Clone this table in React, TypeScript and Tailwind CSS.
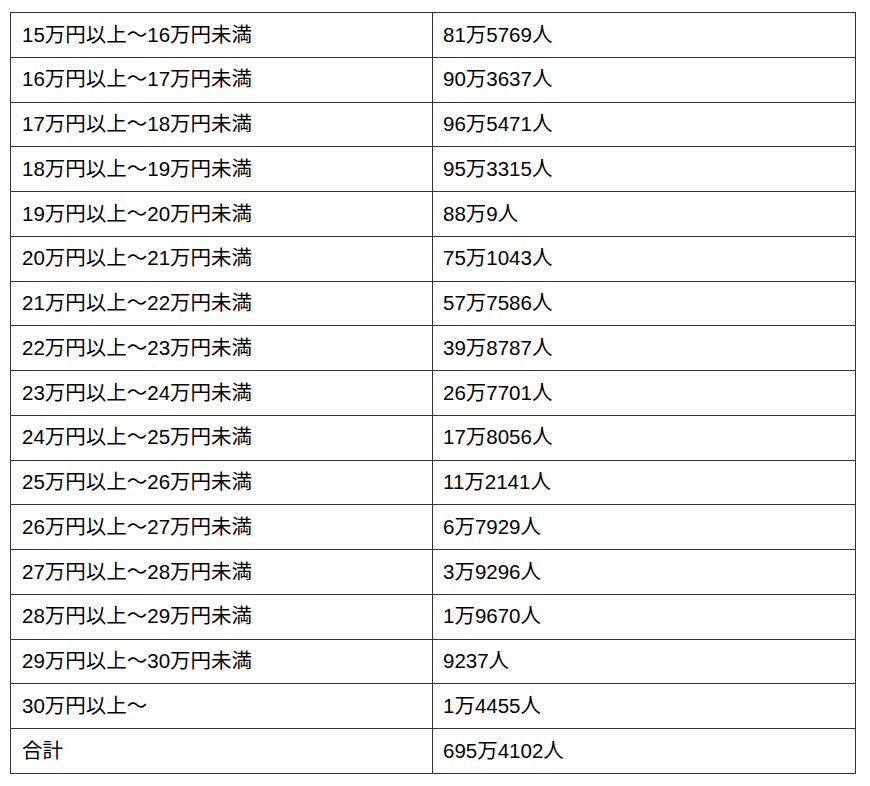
import React from "react";

const rows: [string, string][] = [
  ["15万円以上～16万円未満", "81万5769人"],
  ["16万円以上～17万円未満", "90万3637人"],
  ["17万円以上～18万円未満", "96万5471人"],
  ["18万円以上～19万円未満", "95万3315人"],
  ["19万円以上～20万円未満", "88万9人"],
  ["20万円以上～21万円未満", "75万1043人"],
  ["21万円以上～22万円未満", "57万7586人"],
  ["22万円以上～23万円未満", "39万8787人"],
  ["23万円以上～24万円未満", "26万7701人"],
  ["24万円以上～25万円未満", "17万8056人"],
  ["25万円以上～26万円未満", "11万2141人"],
  ["26万円以上～27万円未満", "6万7929人"],
  ["27万円以上～28万円未満", "3万9296人"],
  ["28万円以上～29万円未満", "1万9670人"],
  ["29万円以上～30万円未満", "9237人"],
  ["30万円以上～", "1万4455人"],
  ["合計", "695万4102人"],
];

export default function App() {
  return (
    <div
      className="w-[870px] h-[786px] bg-white pt-[12px] pl-[10px]"
      style={{ fontFamily: '"Liberation Sans", "Noto Sans CJK JP", sans-serif' }}
    >
      <table className="border-collapse w-[846px] text-[20.5px] text-black table-fixed">
        <colgroup>
          <col className="w-[422px]" />
          <col />
        </colgroup>
        <tbody>
          {rows.map(([a, b], i) => (
            <tr key={i} className="h-[44.75px]">
              <td className="border border-[#333] pl-[11px] py-0 align-middle leading-none">{a}</td>
              <td className="border border-[#333] pl-[10px] py-0 align-middle leading-none">{b}</td>
            </tr>
          ))}
        </tbody>
      </table>
    </div>
  );
}
